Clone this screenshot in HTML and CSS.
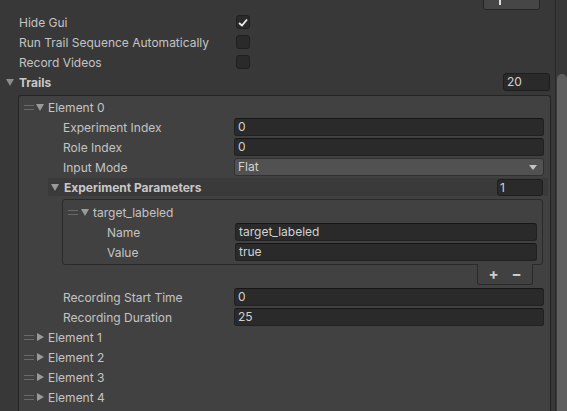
FILE: index.html
```html
<!DOCTYPE html>
<html>
<head>
<meta charset="utf-8">
<link rel="stylesheet" href="styles.css">
</head>
<body>
<div class="window">
  <div class="main">
    <div class="topbar"><div class="topbtn"><span class="stem"></span></div></div>

    <div class="row top"><span class="tlabel">Hide Gui</span><span class="check on"><svg width="10" height="9" viewBox="0 0 10 9"><path d="M1 5 L4 7.5 L9 1.5" fill="none" stroke="#eeeeee" stroke-width="1.8"/></svg></span></div>
    <div class="row top"><span class="tlabel">Run Trail Sequence Automatically</span><span class="check"></span></div>
    <div class="row top"><span class="tlabel">Record Videos</span><span class="check"></span></div>

    <div class="row trails"><span class="tri down big"></span><span class="bold">Trails</span><span class="count wide">20</span></div>

    <div class="list">
      <div class="row ehead"><span class="handle"></span><span class="tri down"></span><span class="ename">Element 0</span></div>
      <div class="row prop"><span class="plabel">Experiment Index</span><span class="field">0</span></div>
      <div class="row prop"><span class="plabel">Role Index</span><span class="field">0</span></div>
      <div class="row prop"><span class="plabel">Input Mode</span><span class="field drop">Flat<span class="arrow"></span></span></div>
      <div class="phead"><span class="tri down"></span><span class="bold">Experiment Parameters</span><span class="count">1</span></div>

      <div class="inner">
        <div class="row ihead"><span class="handle"></span><span class="tri down"></span><span class="ename">target_labeled</span></div>
        <div class="row iprop"><span class="ilabel">Name</span><span class="field">target_labeled</span></div>
        <div class="row iprop"><span class="ilabel">Value</span><span class="field">true</span></div>
      </div>
      <div class="footer"><span class="fbtn">+</span><span class="fbtn">&minus;</span></div>

      <div class="row prop rec"><span class="plabel">Recording Start Time</span><span class="field">0</span></div>
      <div class="row prop"><span class="plabel">Recording Duration</span><span class="field">25</span></div>
      <div class="row ehead"><span class="handle"></span><span class="tri right"></span><span class="ename">Element 1</span></div>
      <div class="row ehead"><span class="handle"></span><span class="tri right"></span><span class="ename">Element 2</span></div>
      <div class="row ehead"><span class="handle"></span><span class="tri right"></span><span class="ename">Element 3</span></div>
      <div class="row ehead"><span class="handle"></span><span class="tri right"></span><span class="ename">Element 4</span></div>
    </div>
  </div>
  <div class="scrollbar"><div class="thumb"></div></div>
</div>
</body>
</html>
```

FILE: styles.css
```css
* { box-sizing: border-box; }
html, body { margin: 0; padding: 0; }
body {
  background: #383838;
  color: #c4c4c4;
  font-family: Inter, "Noto Sans", sans-serif;
  font-size: 12px;
  width: 567px;
  height: 411px;
  overflow: hidden;
}
.window { display: flex; height: 411px; overflow: hidden; }
.main { width: 555px; flex: none; }
.scrollbar {
  width: 12px;
  flex: none;
  border-left: 1px solid #2a2a2a;
  background: #383838;
  padding-left: 1px;
  padding-top: 74px;
}
.thumb {
  height: 400px;
  background: #5f5f5f;
  border-radius: 5px 5px 0 0;
}

.topbar { height: 12px; display: flex; justify-content: flex-end; padding-right: 15px; }
.topbtn {
  width: 57px;
  height: 21px;
  margin-top: -11px;
  background: #464646;
  border: 1px solid #262626;
  border-radius: 3px;
  display: flex;
  align-items: flex-end;
  padding-left: 15px;
  padding-bottom: 4px;
}
.stem { width: 2px; height: 5px; background: #dcdcdc; }

.row { height: 20px; display: flex; align-items: center; white-space: nowrap; }
.top { padding-left: 19px; }
.tlabel { width: 217px; flex: none; }
.check {
  width: 14px; height: 14px;
  background: #2a2a2a;
  border: 1px solid #202020;
  border-radius: 3px;
  display: flex; align-items: center; justify-content: center;
}

.bold { font-weight: 700; color: #c8c8c8; }
.trails { padding-left: 6px; }
.trails .bold { margin-left: 5px; }

.tri { display: inline-block; width: 0; height: 0; flex: none; }
.tri.down {
  border-left: 4px solid transparent;
  border-right: 4px solid transparent;
  border-top: 7px solid #9a9a9a;
}
.tri.down.big {
  border-left-width: 4.5px;
  border-right-width: 4.5px;
  border-top-color: #8c8c8c;
}
.tri.right {
  border-top: 4px solid transparent;
  border-bottom: 4px solid transparent;
  border-left: 7px solid #9a9a9a;
}

.count {
  margin-left: auto;
  width: 46px;
  height: 17px;
  background: #2a2a2a;
  border: 1px solid #1e1e1e;
  border-radius: 3px;
  color: #d2d2d2;
  line-height: 15px;
  padding-left: 2px;
}
.count.wide { width: 47px; height: 18px; line-height: 16px; margin-right: 5px; padding-left: 3px; }

.list {
  margin-left: 18px;
  width: 533px;
  height: 330px;
  background: #414141;
  border: 1px solid #242424;
  border-bottom: none;
  border-radius: 3px 3px 0 0;
  margin-top: 3px;
  padding-top: 1px;
}
.ehead { padding-left: 5px; }
.handle {
  width: 10px; height: 5px; flex: none;
  border-top: 1px solid #6a6a6a;
  border-bottom: 1px solid #6a6a6a;
  margin-right: 2px;
}
.ename { margin-left: 4px; }
.ehead .tri.right { margin-left: 1px; }

.prop { padding-left: 44px; padding-right: 6px; }
.plabel { width: 171px; flex: none; }
.field {
  flex: 1;
  height: 18px;
  background: #2a2a2a;
  border: 1px solid #212121;
  border-top-color: #171717;
  border-radius: 3px;
  color: #d2d2d2;
  line-height: 16px;
  padding-left: 3px;
}
.field.drop {
  background: #515151;
  border: 1px solid #303030;
  position: relative;
}
.arrow {
  position: absolute;
  right: 6px; top: 6px;
  border-left: 4px solid transparent;
  border-right: 4px solid transparent;
  border-top: 5px solid #c4c4c4;
}

.phead {
  height: 18px;
  margin: 1px 2px 1px 29px;
  background: #3a3a3a;
  display: flex; align-items: center;
  padding-left: 3px;
  padding-right: 5px;
}
.phead .bold { margin-left: 5px; }

.inner {
  margin: 3px 7px 0 43px;
  border: 1px solid #2a2a2a;
  border-radius: 3px;
  background: #414141;
  padding: 2px 0 2px;
}
.ihead { padding-left: 5px; }
.ihead .handle { margin-right: 3px; }
.iprop { padding-left: 44px; padding-right: 5px; }
.ilabel { width: 128px; flex: none; }

.footer {
  margin: -1px 17px 0 auto;
  width: 56px;
  height: 21px;
  border: 1px solid #2a2a2a;
  border-top: none;
  border-radius: 0 0 3px 3px;
  background: #414141;
  display: flex;
  align-items: center;
  justify-content: center;
  gap: 13px;
  color: #cfcfcf;
  font-size: 15px;
  font-weight: 700;
}
.fbtn { width: 10px; text-align: center; line-height: 18px; }
.rec { margin-top: 2px; }
```
